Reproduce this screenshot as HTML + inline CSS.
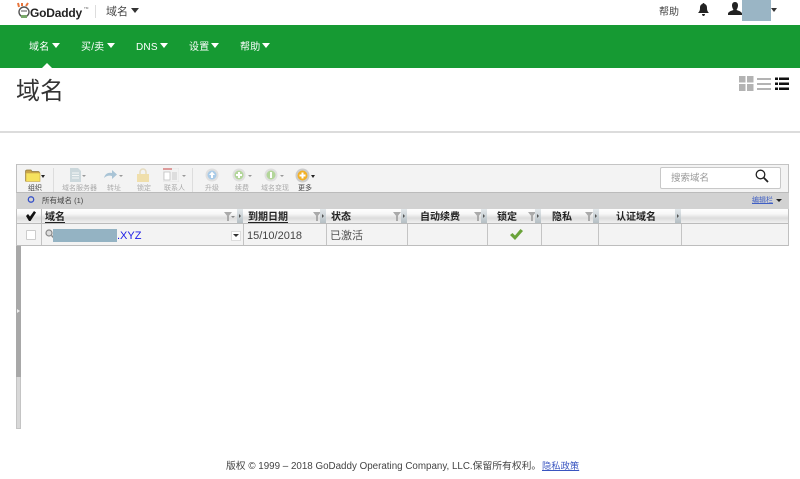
<!DOCTYPE html>
<html lang="zh"><head><meta charset="utf-8"><title>域名</title>
<style>
html,body{margin:0;padding:0;background:#fff}
#p{position:relative;width:800px;height:479px;overflow:hidden;background:#fff;font-family:"Liberation Sans","Noto Sans CJK SC",sans-serif;color:#333;filter:blur(.35px)}
#p div,#p span.a,#p svg{position:absolute}
.t{white-space:nowrap;line-height:1}
.tri{width:0;height:0;border-left:4px solid transparent;border-right:4px solid transparent;border-top:5px solid #fff}
.nav{color:#fff;font-size:10px;top:43px;letter-spacing:.2px}
.lab{font-size:7px;color:#aaa;top:185px;text-align:center;white-space:nowrap;line-height:1}
.hd{top:213px;font-size:10px;font-weight:bold;color:#222;line-height:10px;white-space:nowrap}
.sep{top:209px;height:15px;width:1px;background:#bbb}
.rs{top:224px;height:21px;width:1px;background:#c4c4c4}
.hand{top:209px;width:6px;height:14px;background:linear-gradient(#e2e7ea,#b5bfc4)}
.hand:after{content:"";position:absolute;left:2px;top:5px;border-left:2px solid #555;border-top:2px solid transparent;border-bottom:2px solid transparent}
.fil{top:212px;width:0;height:0;border-left:4px solid transparent;border-right:4px solid transparent;border-top:5px solid #aaa}
.fil:after{content:"";position:absolute;left:-1px;top:-1px;width:2px;height:5px;background:#aaa}
.sm{width:0;height:0;border-left:2px solid transparent;border-right:2px solid transparent;border-top:2px solid #999;top:175px}
</style></head><body><div id="p">

<!-- logo -->
<svg style="left:17px;top:2px" width="14" height="17" viewBox="0 0 14 17"><path d="M2 5L1 1M5 4L5 1M9 4L11 1" stroke="#e8743b" stroke-width="2"/><circle cx="7" cy="10" r="5" fill="#fff" stroke="#555" stroke-width="1.4"/><path d="M4 9h6" stroke="#555"/><path d="M4 13h6v3H4z" fill="#78a86a"/></svg>
<div class="t" style="left:30px;top:7px;font-size:12px;font-weight:bold;color:#222;letter-spacing:-.2px">GoDaddy</div>
<div class="t" style="left:84px;top:7px;font-size:3px;color:#555">TM</div>
<div style="left:95px;top:5px;width:1px;height:13px;background:#ddd"></div>
<div class="t" style="left:106px;top:7px;font-size:11px;color:#444">域名</div>
<div class="tri" style="left:131px;top:8px;border-top-color:#333"></div>

<div class="t" style="left:659px;top:8px;font-size:10px;color:#444">帮助</div>
<svg style="left:698px;top:3px" width="11" height="13" viewBox="0 0 11 13"><path d="M5.5 0c.8 0 1 .5 1 1 2 .5 2.5 2 2.5 4 0 2.500.6 3.500 2 5H0c1.400-1.500 2-2.500 2-5 0-2 .5-3.500 2.500-4 0-.5.2-1 1-1zM4 11h3c0 1-.6 2-1.500 2S4 12 4 11z" fill="#222"/></svg>
<svg style="left:728px;top:2px" width="14" height="13" viewBox="0 0 14 13"><path d="M7 0c2 0 3 1.500 3 3.500S9 7 8.500 8c2 .8 5 1.500 5.500 3.500V13H0v-1.500C.5 9.500 3.500 8.800 5.500 8 5 7 4 5.500 4 3.500S5 0 7 0z" fill="#222"/></svg>
<div style="left:742px;top:0;width:29px;height:21px;background:#9ab5c5"></div>
<div style="left:771px;top:8px;width:0;height:0;border-left:3px solid transparent;border-right:3px solid transparent;border-top:4px solid #333"></div>

<!-- green nav -->
<div style="left:0;top:25px;width:800px;height:43px;background:#169a33"></div>
<div class="t nav" style="left:29px">域名</div><div class="tri" style="left:52px;top:43px"></div>
<div class="t nav" style="left:81px">买/卖</div><div class="tri" style="left:107px;top:43px"></div>
<div class="t nav" style="left:136px">DNS</div><div class="tri" style="left:160px;top:43px"></div>
<div class="t nav" style="left:189px">设置</div><div class="tri" style="left:211px;top:43px"></div>
<div class="t nav" style="left:240px">帮助</div><div class="tri" style="left:262px;top:43px"></div>
<div style="left:42px;top:63px;width:0;height:0;border-left:5px solid transparent;border-right:5px solid transparent;border-bottom:5px solid #fff"></div>

<!-- title -->
<div class="t" style="left:16px;top:80px;font-size:24px;color:#333">域名</div>

<!-- view icons -->
<svg style="left:738px;top:76px" width="53" height="16" viewBox="0 0 53 16">
<g fill="#b3b3b3"><rect x="1" y="0" width="6.500" height="6.500"/><rect x="9" y="0" width="6.500" height="6.500"/><rect x="1" y="8" width="6.500" height="7"/><rect x="9" y="8" width="6.500" height="7"/>
<rect x="19" y="2" width="14" height="2"/><rect x="19" y="7" width="14" height="2"/><rect x="19" y="12" width="14" height="2"/></g>
<g fill="#111"><rect x="37" y="1.500" width="3" height="2.500"/><rect x="41" y="1.500" width="10" height="2.500"/><rect x="37" y="6.500" width="3" height="2.500"/><rect x="41" y="6.500" width="10" height="2.500"/><rect x="37" y="11.500" width="3" height="2.500"/><rect x="41" y="11.500" width="10" height="2.500"/></g>
</svg>

<div style="left:0;top:131px;width:800px;height:2px;background:#dcdcdc"></div>

<!-- grid frame -->
<div style="left:16px;top:164px;width:773px;height:29px;background:#f3f3f3;border-top:1px solid #c4c4c4;box-sizing:border-box"></div>
<div style="left:788px;top:164px;width:1px;height:82px;background:#c0c0c0"></div>
<div style="left:16px;top:164px;width:1px;height:82px;background:#c0c0c0"></div>
<div style="left:16px;top:192px;width:773px;height:17px;background:#d2d2d2;border-top:1px solid #bbb;box-sizing:border-box"></div>

<!-- toolbar -->
<svg style="left:25px;top:169px" width="16" height="13" viewBox="0 0 16 13"><path d="M.5 2.500C.5 1.500 1 1 2 1h4l1 1.500h6c1 0 1.500.5 1.500 1.500v8H.5z" fill="#c9a34a" stroke="#8f7a3b" stroke-width=".7"/><rect x="1" y="4" width="14" height="8.500" fill="#f6e25e" stroke="#c9a94a" stroke-width=".6"/></svg>
<div style="left:41px;top:175px;width:0;height:0;border-left:2px solid transparent;border-right:2px solid transparent;border-top:3px solid #222"></div>
<div class="lab" style="left:28px;color:#444">组织</div>
<div style="left:53px;top:168px;width:1px;height:24px;background:#ddd"></div>

<svg style="left:70px;top:168px" width="11" height="14" viewBox="0 0 11 14"><path d="M0 0h8l3 3v11H0z" fill="#ccd8dc"/><path d="M2 5h7M2 7.500h7M2 10h7" stroke="#f4f6f6"/></svg>
<div class="sm" style="left:82px"></div><div class="lab" style="left:62px">域名服务器</div>
<svg style="left:104px;top:170px" width="13" height="10" viewBox="0 0 13 10"><path d="M0 8C1 4 4 2 8 3V0l5 4.500L8 9V6C5 5 2 6 0 8z" fill="#a9c4d6"/></svg>
<div class="sm" style="left:119px"></div><div class="lab" style="left:107px">转址</div>
<svg style="left:137px;top:168px" width="12" height="14" viewBox="0 0 12 14"><path d="M3 6V4a3 3 0 0 1 6 0v2" fill="none" stroke="#e6dcc0" stroke-width="1.500"/><rect x="0" y="6" width="12" height="8" fill="#f0dfac"/></svg>
<div class="lab" style="left:137px">锁定</div>
<svg style="left:163px;top:168px" width="16" height="14" viewBox="0 0 16 14"><rect width="16" height="14" fill="#f2f2f2" stroke="#ddd" stroke-width=".5"/><rect width="9" height="2" fill="#dd9a9a"/><rect x="1" y="4" width="6" height="8" fill="#fff" stroke="#bbb" stroke-width=".7"/><rect x="9" y="4" width="5" height="8" fill="#ddd"/></svg>
<div class="sm" style="left:182px"></div><div class="lab" style="left:164px">联系人</div>
<div style="left:192px;top:168px;width:1px;height:24px;background:#ddd"></div>

<svg style="left:205px;top:168px" width="14" height="14" viewBox="0 0 14 14"><circle cx="7" cy="7" r="6.500" fill="#dfdfdf"/><circle cx="7" cy="7" r="4.500" fill="#a9cbe8"/><path d="M7 3.500L10 7H8v3H6V7H4z" fill="#fff"/></svg>
<div class="lab" style="left:205px">升级</div>
<svg style="left:232px;top:168px" width="14" height="14" viewBox="0 0 14 14"><circle cx="7" cy="7" r="6.500" fill="#dfdfdf"/><circle cx="7" cy="7" r="4.500" fill="#b3d69a"/><path d="M6 4h2v6H6zM4 6h6v2H4z" fill="#fff"/></svg>
<div class="sm" style="left:248px"></div><div class="lab" style="left:235px">续费</div>
<svg style="left:264px;top:168px" width="14" height="14" viewBox="0 0 14 14"><circle cx="7" cy="7" r="6.500" fill="#dfdfdf"/><circle cx="7" cy="7" r="4.500" fill="#b3d69a"/><path d="M6 4h2v6H6z" fill="#fff"/></svg>
<div class="sm" style="left:280px"></div><div class="lab" style="left:261px">域名变现</div>
<svg style="left:295px;top:168px" width="15" height="15" viewBox="0 0 15 15"><circle cx="7.500" cy="7.500" r="7" fill="#ccc"/><circle cx="7.500" cy="7.500" r="5" fill="#f2b127"/><path d="M6.500 4.500h2v6h-2zM4.500 6.500h6v2h-6z" fill="#fff"/></svg>
<div style="left:311px;top:175px;width:0;height:0;border-left:2px solid transparent;border-right:2px solid transparent;border-top:3px solid #222"></div>
<div class="lab" style="left:298px;color:#444">更多</div>

<!-- search -->
<div style="left:660px;top:167px;width:121px;height:22px;background:#fff;border:1px solid #c8c8c8;border-radius:2px;box-sizing:border-box"></div>
<div class="t" style="left:671px;top:174px;font-size:9.5px;color:#999">搜索域名</div>
<svg style="left:755px;top:169px" width="14" height="14" viewBox="0 0 14 14"><circle cx="5.500" cy="5.500" r="4.300" fill="none" stroke="#222" stroke-width="1.300"/><path d="M8.800 8.800L13 13" stroke="#222" stroke-width="1.800"/></svg>

<!-- status bar -->
<svg style="left:27px;top:195px" width="8" height="9" viewBox="0 0 8 9"><circle cx="4" cy="4.500" r="2.700" fill="none" stroke="#3550c8" stroke-width="1.300"/></svg>
<div class="t" style="left:42px;top:197px;font-size:7.5px;color:#444">所有域名 (1)</div>
<div class="t" style="left:752px;top:197px;font-size:7px;color:#3f5fc4;text-decoration:underline">编辑栏</div>
<div style="left:776px;top:199px;width:0;height:0;border-left:3px solid transparent;border-right:3px solid transparent;border-top:3px solid #222"></div>

<!-- header -->
<div style="left:17px;top:209px;width:771px;height:15px;background:linear-gradient(#fff 0,#f7f7f7 35%,#dcdcdc 65%,#f0f0f0 100%);border-bottom:1px solid #bbb;box-sizing:border-box"></div>
<svg style="left:26px;top:211px" width="10" height="10" viewBox="0 0 10 10"><path d="M0 5l2-2 2 2.500L8 0l2 1.500L4.500 10H3z" fill="#111"/></svg>
<div class="hd" style="left:45px;border-bottom:1px solid #222;height:9px">域名</div>
<div class="fil" style="left:224px"></div><div style="left:231px;top:216px;width:0;height:0;border-left:2px solid transparent;border-right:2px solid transparent;border-top:2px solid #888"></div>
<div class="hand" style="left:237px"></div>
<div class="hd" style="left:248px;border-bottom:1px solid #222;height:9px">到期日期</div>
<div class="fil" style="left:313px"></div><div class="hand" style="left:320px"></div>
<div class="hd" style="left:331px">状态</div>
<div class="fil" style="left:393px"></div><div class="hand" style="left:401px"></div>
<div class="hd" style="left:420px">自动续费</div>
<div class="fil" style="left:474px"></div><div class="hand" style="left:481px"></div>
<div class="hd" style="left:497px">锁定</div>
<div class="fil" style="left:528px"></div><div class="hand" style="left:535px"></div>
<div class="hd" style="left:552px">隐私</div>
<div class="fil" style="left:585px"></div><div class="hand" style="left:593px"></div>
<div class="hd" style="left:616px">认证域名</div>
<div class="hand" style="left:675px"></div>
<div class="sep" style="left:41px"></div>

<!-- row -->
<div style="left:17px;top:224px;width:771px;height:22px;background:#f3f3f3;border-bottom:1px solid #bdbdbd;box-sizing:border-box"></div>
<div style="left:26px;top:230px;width:8px;height:8px;background:#fff;border:1px solid #ccc;border-radius:1px"></div>
<div class="rs" style="left:41px"></div><div class="rs" style="left:243px"></div><div class="rs" style="left:326px"></div><div class="rs" style="left:407px"></div><div class="rs" style="left:487px"></div><div class="rs" style="left:541px"></div><div class="rs" style="left:598px"></div><div class="rs" style="left:681px"></div>
<svg style="left:45px;top:229px" width="10" height="10" viewBox="0 0 10 10"><circle cx="4" cy="4" r="3" fill="#ddd" stroke="#888" stroke-width="1.200"/><path d="M6.500 6.500L9.500 9.500" stroke="#888" stroke-width="1.500"/></svg>
<div style="left:53px;top:229px;width:64px;height:13px;background:#94b3c3"></div>
<div class="t" style="left:117px;top:231px;font-size:11px;color:#1a1ae6">.XYZ</div>
<div style="left:231px;top:231px;width:8px;height:8px;background:#fff;border:1px solid #ddd"></div>
<div style="left:233px;top:234px;width:0;height:0;border-left:3px solid transparent;border-right:3px solid transparent;border-top:3px solid #333"></div>
<div class="t" style="left:247px;top:231px;font-size:11px;color:#444">15/10/2018</div>
<div class="t" style="left:330px;top:231px;font-size:11px;color:#555">已激活</div>
<svg style="left:510px;top:229px" width="13" height="11" viewBox="0 0 13 11"><path d="M0 6l2.500-2 2.500 2.500L10.500 0 13 2 5 11z" fill="#6aa33a"/></svg>

<!-- left splitter -->
<div style="left:16px;top:246px;width:5px;height:183px;background:#d8d8d8;border:1px solid #c4c4c4;border-top:0;box-sizing:border-box"></div>
<div style="left:16px;top:246px;width:5px;height:131px;background:#a8a8a8"></div>
<div style="left:17px;top:309px;width:0;height:0;border-left:3px solid #eee;border-top:2px solid transparent;border-bottom:2px solid transparent"></div>

<!-- footer -->
<div class="t" style="left:226px;top:462px;font-size:9.8px;color:#444">版权 © 1999 – 2018 GoDaddy Operating Company, LLC.保留所有权利。</div>
<div class="t" style="left:542px;top:462px;font-size:9.3px;color:#3a55c0;text-decoration:underline">隐私政策</div>
</div></body></html>
